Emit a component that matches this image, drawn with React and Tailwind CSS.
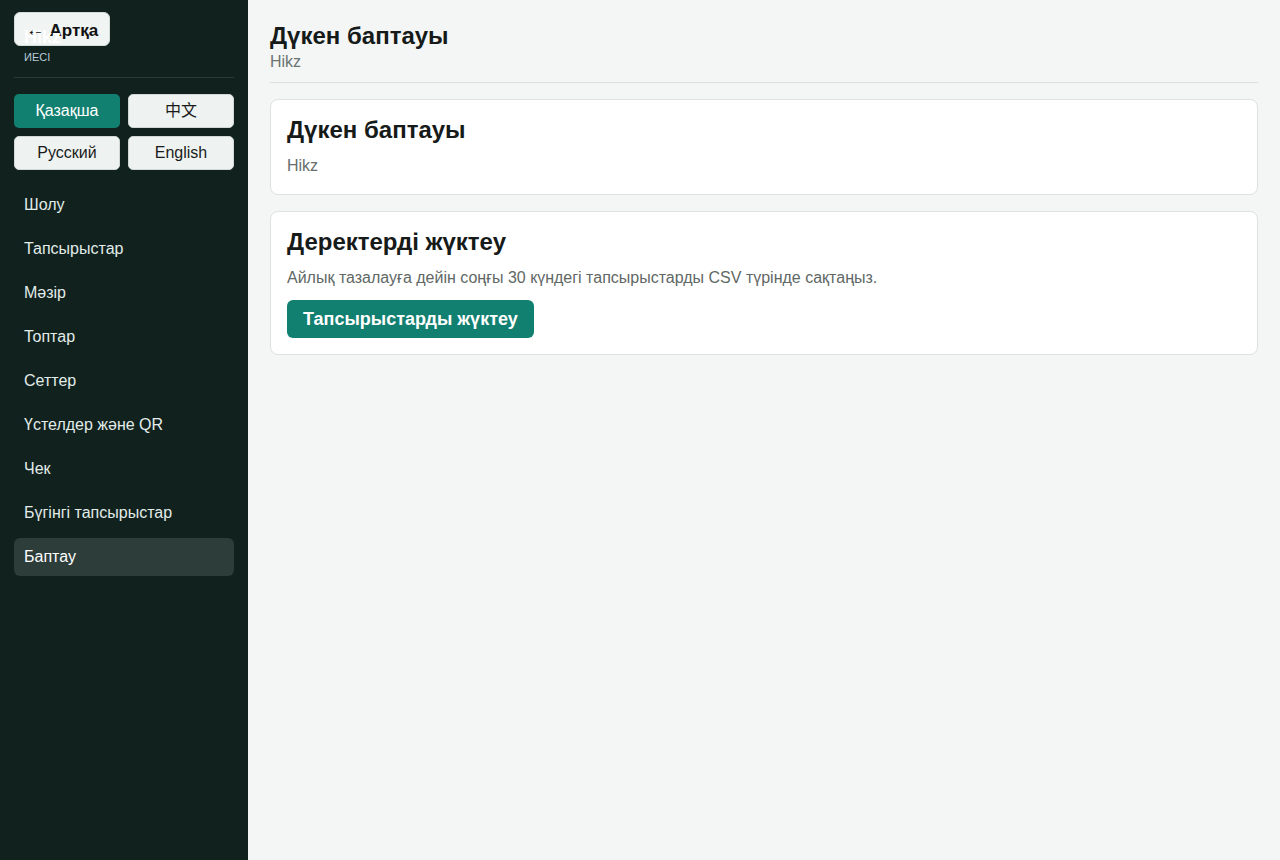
const langs = [
    { label: "Қазақша", active: true },
    { label: "中文" },
    { label: "Русский" },
    { label: "English" },
];

const nav = [
    "Шолу",
    "Тапсырыстар",
    "Мәзір",
    "Топтар",
    "Сеттер",
    "Үстелдер және QR",
    "Чек",
    "Бүгінгі тапсырыстар",
    "Баптау",
];

export default function App() {
    return (
        <div className="min-h-screen flex bg-[#f4f6f5] font-['Liberation_Sans','Noto_Sans_CJK_SC',sans-serif]">
            {/* Sidebar */}
            <aside className="relative w-[248px] shrink-0 bg-[#10211e] px-[14px] min-h-screen">
                <button className="absolute top-[12px] left-[14px] h-[34px] w-[96px] rounded-[6px] bg-[#f0f4f2] border border-[#d5ddda] text-[#111] font-bold text-[17px] leading-none">
                    <span className="font-normal text-[19px]">←</span> Артқа
                </button>
                <div className="relative pt-[26px] px-[10px] pb-[13px] border-b border-[#2a3b37]">
                    <div className="text-white font-bold text-[18px] leading-[22px]">Hikz</div>
                    <div className="text-[#b9c9dc] text-[11px] leading-[14px] mt-[2px]">ИЕСІ</div>
                </div>
                <div className="grid grid-cols-2 gap-[8px] mt-[16px]">
                    {langs.map((l) => (
                        <button
                            key={l.label}
                            className={
                                l.active
                                    ? "h-[34px] rounded-[5px] bg-[#128070] text-white text-[16px]"
                                    : "h-[34px] rounded-[5px] bg-[#eef3f1] border border-[#cfd8d5] text-[#1a1a1a] text-[16px]"
                            }
                        >
                            {l.label}
                        </button>
                    ))}
                </div>
                <nav className="flex flex-col gap-[6px] mt-[16px]">
                    {nav.map((n) => (
                        <div
                            key={n}
                            className={
                                n === "Баптау"
                                    ? "h-[38px] flex items-center px-[10px] rounded-[6px] bg-[#2d3d3a] text-white text-[16px]"
                                    : "h-[38px] flex items-center px-[10px] rounded-[6px] text-[#e2ece9] text-[16px]"
                            }
                        >
                            {n}
                        </div>
                    ))}
                </nav>
            </aside>

            {/* Main */}
            <main className="flex-1 px-[22px] pt-[21px]">
                <div className="border-b border-[#d9e0de] pb-[10px]">
                    <h1 className="text-[24px] leading-[30px] font-bold text-[#161a19]">Дүкен баптауы</h1>
                    <p className="text-[16px] leading-[20px] text-[#6b7471] mt-[1px]">Hikz</p>
                </div>

                <div className="mt-[16px] flex flex-col gap-[16px]">
                    <div className="bg-white border border-[#dbe2e0] rounded-[8px] px-[16px] pt-[15px] pb-[18px]">
                        <h2 className="text-[24px] leading-[30px] font-bold text-[#161a19]">Дүкен баптауы</h2>
                        <p className="text-[16px] leading-[20px] text-[#666e6b] mt-[11px]">Hikz</p>
                    </div>

                    <div className="bg-white border border-[#dbe2e0] rounded-[8px] px-[16px] pt-[15px] pb-[16px]">
                        <h2 className="text-[24px] leading-[30px] font-bold text-[#161a19]">Деректерді жүктеу</h2>
                        <p className="text-[16px] leading-[22px] text-[#5f6865] mt-[10px]">
                            Айлық тазалауға дейін соңғы 30 күндегі тапсырыстарды CSV түрінде сақтаңыз.
                        </p>
                        <button className="mt-[11px] h-[38px] px-[16px] rounded-[6px] bg-[#128070] text-white font-bold text-[18px] leading-none">
                            Тапсырыстарды жүктеу
                        </button>
                    </div>
                </div>
            </main>
        </div>
    );
}
